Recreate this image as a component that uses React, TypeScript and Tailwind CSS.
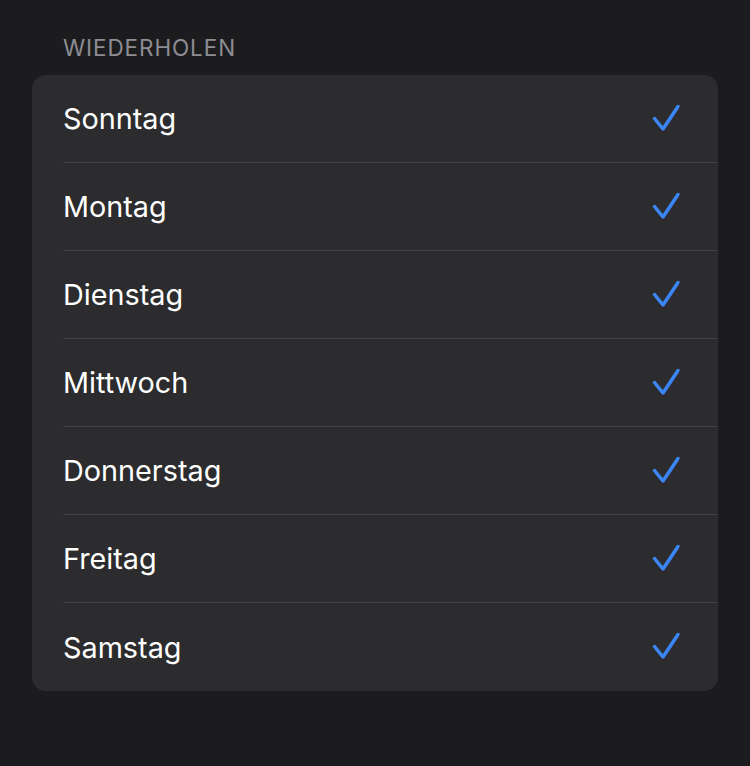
const days = ["Sonntag", "Montag", "Dienstag", "Mittwoch", "Donnerstag", "Freitag", "Samstag"];

function Check() {
  return (
    <svg width="30" height="30" viewBox="0 0 30 30" fill="none">
      <path
        d="M3.5 14.5 L12 25 L27 2.5"
        stroke="#3b86f7"
        strokeWidth="3.5"
        strokeLinecap="round"
        strokeLinejoin="round"
      />
    </svg>
  );
}

export default function App() {
  return (
    <div
      className="min-h-[766px] w-[750px] bg-[#1c1c1e] pt-[35px]"
      style={{ fontFamily: "Inter, 'Noto Sans', sans-serif" }}
    >
      <div className="pl-[63px] text-[22.5px] leading-[26px] tracking-[0.9px] text-[#8d8d93]">
        WIEDERHOLEN
      </div>
      <div className="mx-[32px] mt-[14px] overflow-hidden rounded-[14px] bg-[#2c2c2e]">
        {days.map((d, i) => (
          <div key={d} className="pl-[31px]">
            <div
              className={
                "flex h-[88px] items-center justify-between pr-[37px] " +
                (i < days.length - 1 ? "border-b border-[#444447]" : "")
              }
            >
              <span className="pt-[1px] text-[28.8px] text-white">{d}</span>
              <Check />
            </div>
          </div>
        ))}
      </div>
    </div>
  );
}
